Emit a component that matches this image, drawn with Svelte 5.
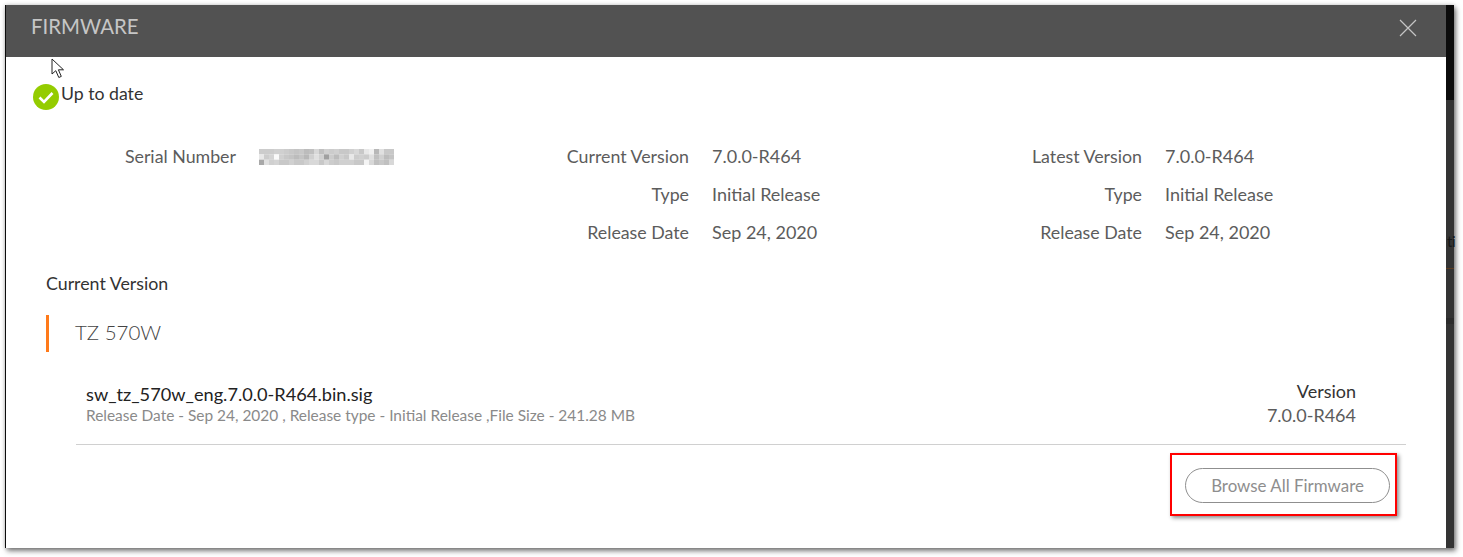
<script>
  const columns = [
    { rows: [['Serial Number', null]] },
    { rows: [['Current Version', '7.0.0-R464'], ['Type', 'Initial Release'], ['Release Date', 'Sep 24, 2020']] },
    { rows: [['Latest Version', '7.0.0-R464'], ['Type', 'Initial Release'], ['Release Date', 'Sep 24, 2020']] }
  ];
  const mosaic = [
    'cc cc cc d0 d0 cc c8 c4 c8 bc c0 d8 c0 d0 cc d0 c8 c8 d0 d8 c8 e8 f0 b8 e0 c8 c8',
    'e8 cc d4 fa d0 c8 c4 bc c4 b8 d0 e0 d0 a0 cc bc d0 c8 e8 cc d0 cc e0 c0 d0 bc c4',
    'a8 e0 d0 d4 c8 c8 d0 c8 c8 d0 d8 d8 c8 d8 cc c8 d0 d0 d0 c8 c8 f4 d8 c0 c8 c0 d8'
  ];
  const cells = mosaic.flatMap((row, y) =>
    row.split(' ').map((c, x) => ({ x, y, fill: '#' + c + c + c }))
  );
</script>

<div class="page">
  <div class="frame">
    <div class="modal">
      <header class="head">
        <span class="title">FIRMWARE</span>
        <svg class="close" width="18" height="18" viewBox="0 0 18 18" aria-label="Close">
          <path d="M1 1 L17 17 M17 1 L1 17" stroke="#c4c4c4" stroke-width="1.2" fill="none" />
        </svg>
      </header>

      <div class="status">
        <svg width="26" height="26" viewBox="0 0 26 26">
          <circle cx="13" cy="13" r="13" fill="#94cc00" />
          <path d="M6.5 13.5 L11 18 L19.5 9" stroke="#fff" stroke-width="2.6" fill="none" />
        </svg>
        <span>Up to date</span>
      </div>

      <div class="details">
        {#each columns as col}
          <div class="col">
            {#each col.rows as [label, value]}
              <div class="label">{label}</div>
              {#if value}
                <div class="value">{value}</div>
              {:else}
                <svg class="blur" width="135" height="16" viewBox="0 0 27 3" preserveAspectRatio="none">
                  {#each cells as c}
                    <rect x={c.x} y={c.y} width="1.02" height="1.02" fill={c.fill} />
                  {/each}
                </svg>
              {/if}
            {/each}
          </div>
        {/each}
      </div>

      <h3 class="section">Current Version</h3>
      <div class="model"><span>TZ 570W</span></div>

      <div class="file">
        <div class="file-left">
          <div class="file-name">sw_tz_570w_eng.7.0.0-R464.bin.sig</div>
          <div class="file-meta">Release Date - Sep 24, 2020 , Release type - Initial Release ,File Size - 241.28 MB</div>
        </div>
        <div class="file-right">
          <div class="ver-label">Version</div>
          <div class="ver-value">7.0.0-R464</div>
        </div>
      </div>

      <div class="actions">
        <div class="callout">
          <button class="browse">Browse All Firmware</button>
        </div>
      </div>
    </div>
    <div class="behind"><span class="behind-text">ti</span></div>
  </div>

  <svg class="cursor" width="14" height="21" viewBox="0 0 14 21">
    <path d="M1 1 L1 16 L4.8 12.7 L7.8 19.5 L10.3 18.4 L7.4 11.8 L12.5 11.8 Z" fill="#fff" stroke="#222" stroke-width="1" />
  </svg>
</div>

<style>
  :global(body) { margin: 0; background: #fff; }
  .page {
    position: relative;
    width: 1463px;
    height: 557px;
    box-sizing: border-box;
    padding: 5px 9px 9px 5px;
    font-family: "Lato", "Liberation Sans", sans-serif;
    overflow: hidden;
  }
  .frame {
    height: 543px;
    background: #0c0c0c;
    padding-left: 1px;
    box-shadow: 2px 3px 5px rgba(0,0,0,.5), 0 0 4px rgba(0,0,0,.2);
    display: flex;
  }
  .behind {
    width: 8px;
    flex: none;
    position: relative;
    background: linear-gradient(
      #0c0c0c 0 95px, #333 95px 263px, #5c3c20 263px 264px,
      #333 264px 313px, #2b2b2b 313px 319px, #333 319px
    );
  }
  .behind-text {
    position: absolute;
    left: 1px;
    top: 226px;
    font-size: 15px;
    letter-spacing: -.5px;
    line-height: 20px;
    color: #161616;
  }
  .modal { flex: 1; background: #fff; min-width: 0; }
  .head {
    box-sizing: border-box;
    height: 52px;
    background: #525252;
    display: flex;
    align-items: center;
    justify-content: space-between;
    padding: 0 29px 8px 25px;
  }
  .title { color: #c6c6c6; font-size: 20.4px; margin-top: -2px; }
  .close { margin-top: 1px; }
  .status {
    display: flex;
    align-items: flex-start;
    margin: 27px 0 0 27px;
    height: 26px;
    font-size: 17.7px;
    color: #333;
  }
  .status span { margin-left: 2px; line-height: 20px; }
  .details {
    display: grid;
    grid-template-columns: repeat(3, 453px);
    margin: 27px 0 0 60px;
    height: 114px;
  }
  .col {
    display: grid;
    grid-template-columns: 170px 1fr;
    column-gap: 23px;
    grid-auto-rows: 38px;
    align-items: center;
    align-content: start;
    font-size: 18px;
    height: 114px;
  }
  .label { text-align: right; color: #5c5c5c; font-size: 17.8px; }
  .value { color: #5c5c5c; }
  .blur { display: block; margin-top: 2px; }
  .section {
    margin: 20px 0 0 40px;
    font-size: 17.8px;
    font-weight: 400;
    line-height: 24px;
    color: #333;
  }
  .model {
    margin: 20px 0 0 40px;
    height: 37px;
    border-left: 3px solid #ff7a1a;
    padding-left: 26px;
    font-size: 20.5px;
    font-weight: 300;
    color: #444;
  }
  .model span { display: block; line-height: 35px; }
  .file {
    margin: 28px 90px 0 80px;
    height: 64px;
    display: flex;
    justify-content: space-between;
  }
  .file-name { font-size: 18.2px; color: #222; line-height: 24px; margin-top: 2px; }
  .file-meta { font-size: 15.45px; color: #8a8a8a; line-height: 17px; margin-top: 1px; }
  .file-right { text-align: right; font-size: 18px; line-height: 24px; margin-top: -1px; }
  .ver-label { color: #333; }
  .ver-value { color: #5c5c5c; }
  .actions {
    margin: 0 40px 0 70px;
    border-top: 1px solid #d0d0d0;
    display: flex;
    justify-content: flex-end;
    padding: 8px 9px 0 0;
  }
  .callout {
    border: 2px solid #f00;
    padding: 13px 5px 11px 13px;
    box-shadow: 2px 2px 4px rgba(0,0,0,.45);
    background: #fff;
  }
  .browse {
    display: block;
    width: 205px;
    height: 35px;
    border: 1px solid #8f8f8f;
    border-radius: 18px;
    background: #fff;
    color: #8e8e8e;
    font: inherit;
    font-size: 16.9px;
    padding: 0;
  }
  .cursor { position: absolute; left: 51px; top: 58px; }
</style>
